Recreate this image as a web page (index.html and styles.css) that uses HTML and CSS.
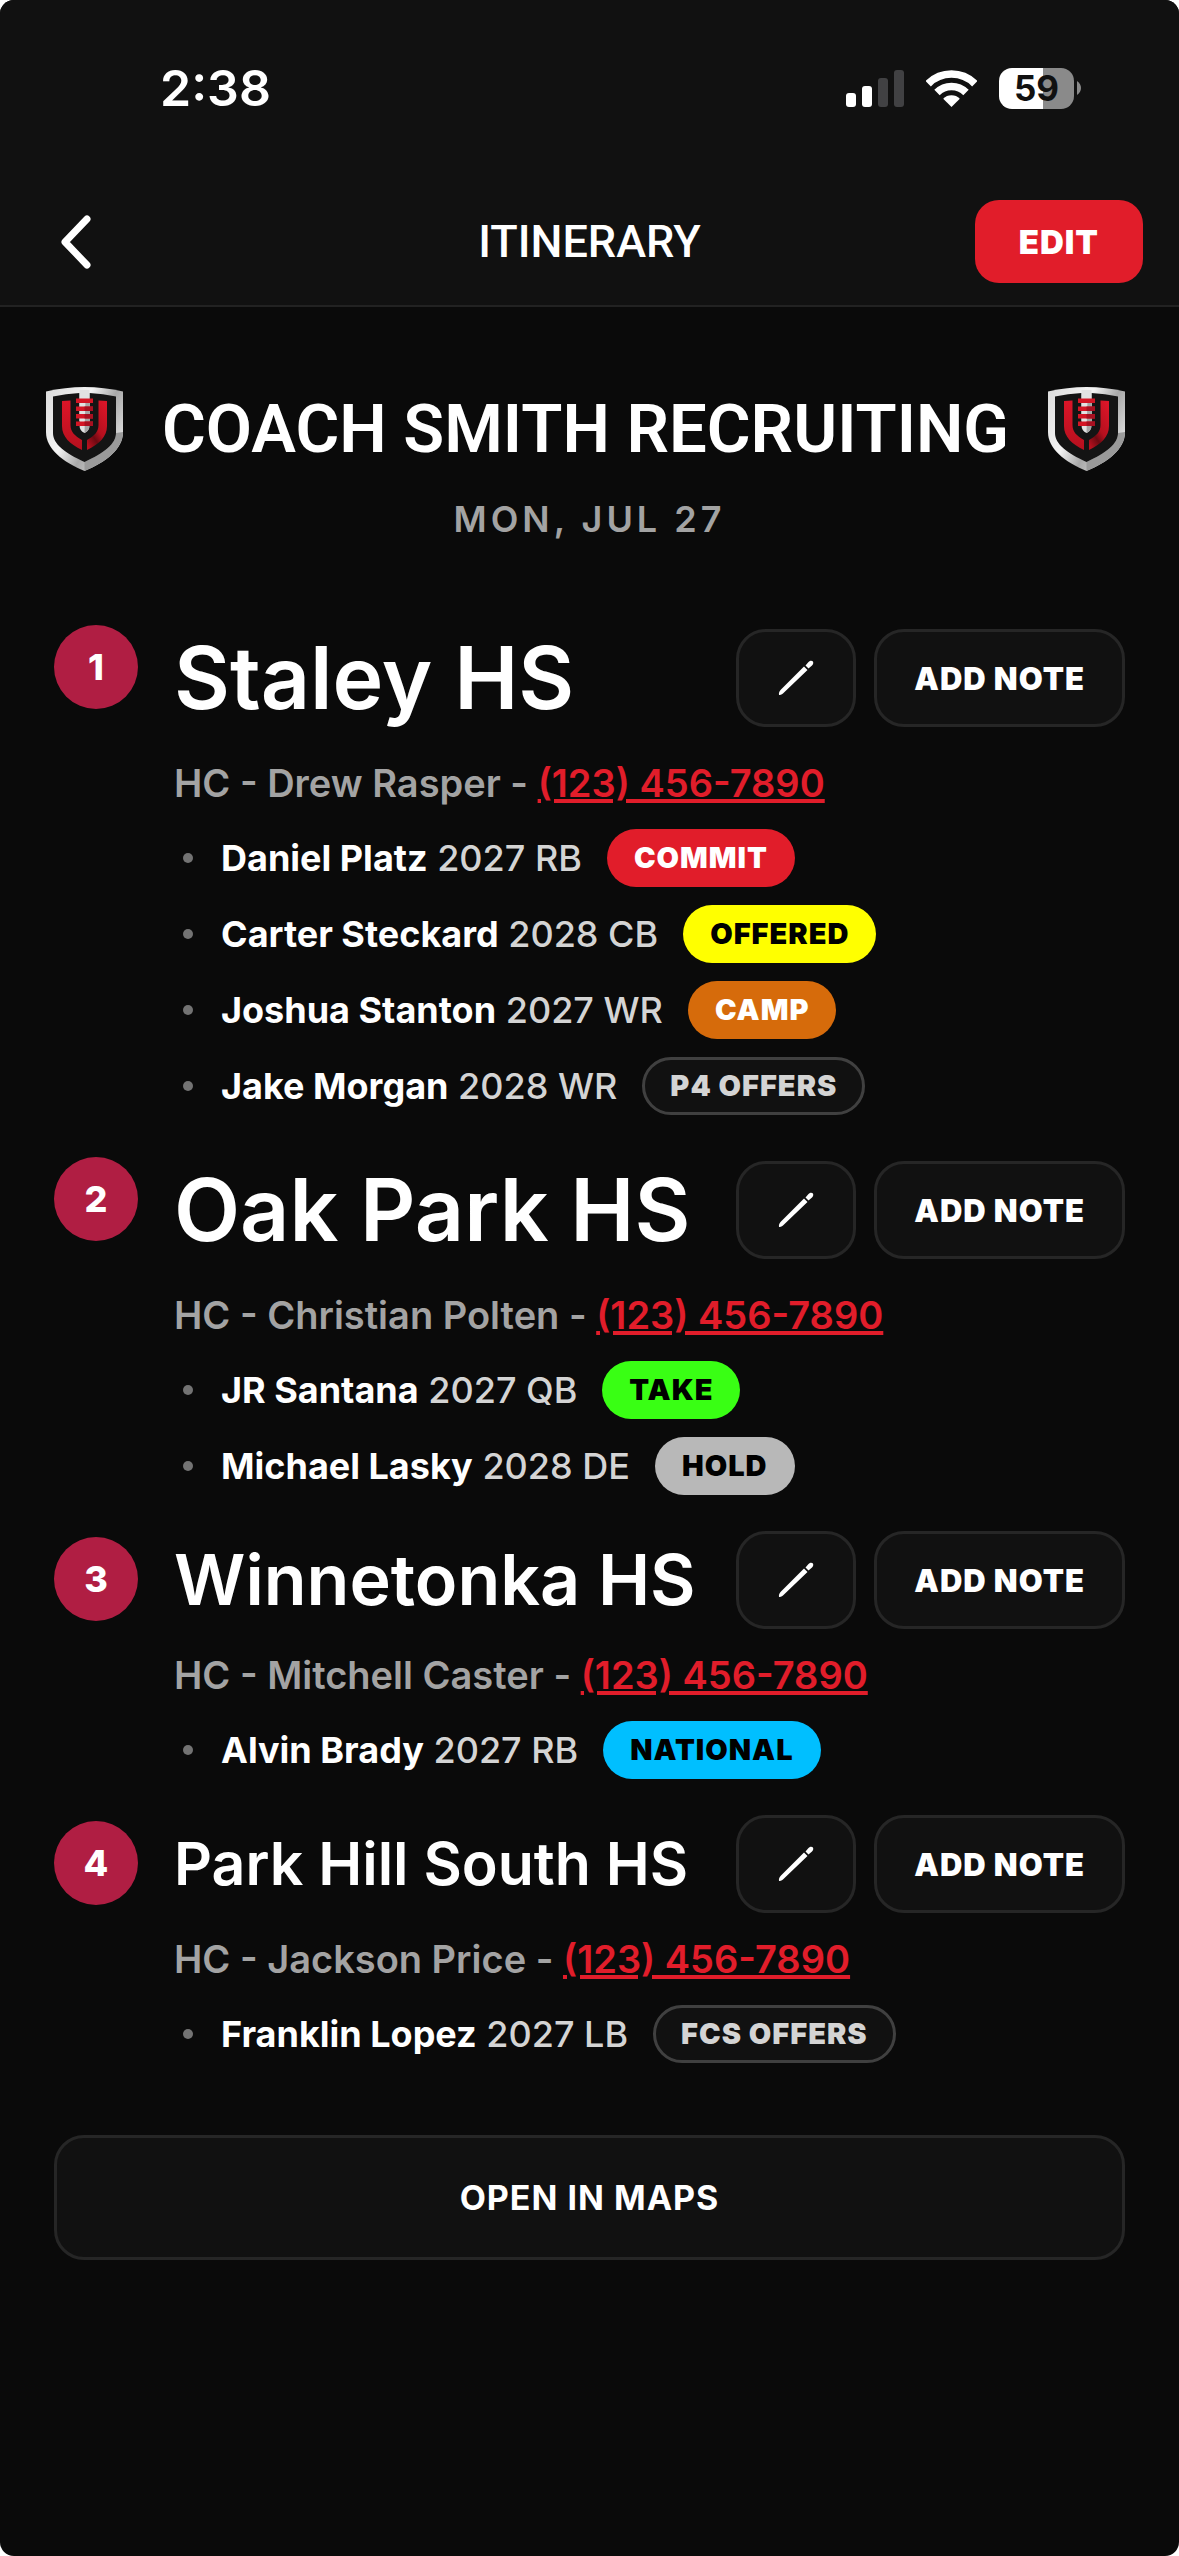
FILE: index.html
```html
<!DOCTYPE html>
<html lang="en">
<head>
    <meta charset="UTF-8">
    <meta name="viewport" content="width=device-width, initial-scale=1">
    <title>Itinerary</title>
    <link rel="stylesheet" href="styles.css">
</head>
<body>
<!-- shared icons -->
<svg class="defs" width="0" height="0" aria-hidden="true">
    <defs>
        <linearGradient id="silver" x1="0" y1="0" x2="1" y2="0.6">
            <stop offset="0" stop-color="#dcdcdc"/>
            <stop offset="0.45" stop-color="#f4f4f4"/>
            <stop offset="0.7" stop-color="#a8a8a8"/>
            <stop offset="1" stop-color="#dedede"/>
        </linearGradient>
        <linearGradient id="red" x1="0" y1="0" x2="0" y2="1">
            <stop offset="0" stop-color="#dc1528"/>
            <stop offset="1" stop-color="#b5101e"/>
        </linearGradient>
        <linearGradient id="darkred" x1="0.8" y1="0" x2="0.2" y2="1">
            <stop offset="0" stop-color="#dc1528"/>
            <stop offset="0.55" stop-color="#b5101e"/>
            <stop offset="0.75" stop-color="#6d0a12"/>
            <stop offset="1" stop-color="#b5101e"/>
        </linearGradient>
    </defs>
    <symbol id="shield" viewBox="0 0 77 84">
        <path fill="url(#silver)" d="M0 4.5Q19 0 38.5 0T77 4.5V45C77 62 60 75 38.5 84C17 75 0 62 0 45Z"/>
        <path fill="#9a9a9a" d="M38.5 75C58 66 70 57 70 46L77 45C77 62 60 75 38.5 84Z"/>
        <path fill="#141414" d="M7 9.5Q20 6.500 33.500 6V34H43.500V6Q57 6.500 70 9.500V46C70 57 58 66 38.500 75C19 66 7 57 7 46Z"/>
        <path fill="#e2e2e2" d="M33.500 3H43.500V38Q43.500 44 38.500 46Q33.500 44 33.500 38Z"/>
        <path fill="#a5a5a5" d="M39.500 12H43.500V38Q43.500 44 38.500 46Z"/>
        <path fill="url(#red)" d="M16 14L24.500 13.500V38C24.500 45 29 49 36 53V63C24 57 16 50 16 39Z"/>
        <path fill="url(#darkred)" d="M61 14L52.500 13.500V38C52.500 45 48 49 41 53V63C53 57 61 50 61 39Z"/>
        <path fill="#d41625" d="M30 11.500H47V16H30ZM30 19.500H47V24H30ZM30 27H47V31.500H30ZM30 34.500H47V39H30Z"/>
        <path fill="#a81020" d="M38.500 19.500H47V24H38.500ZM38.500 27H47V31.500H38.500ZM38.500 34.500H47V39H38.500Z"/>
    </symbol>
    <symbol id="pencil" viewBox="0 0 36 36">
        <path fill="#fff" d="M1 35C0.500 33 1.500 31 3 29.500L26 6.500L29.500 10L6 32.500C4.500 34 3 35.300 1 35Z"/>
        <path fill="#fff" d="M27.500 5.500L30.500 2C32.200 0.300 34 0.700 34.700 1.300C35.400 2 35.700 3.800 34 5.500L30.500 8.500Z"/>
    </symbol>
</svg>

<div class="screen">
    <header class="top">
        <div class="status">
            <span class="clock">2:38</span>
            <div class="status-icons">
                <svg width="58" height="38" viewBox="0 0 58 38" aria-hidden="true">
                    <rect x="0" y="24" width="10" height="14" rx="3" fill="#fff"/>
                    <rect x="16" y="17" width="10" height="21" rx="3" fill="#fff"/>
                    <rect x="32" y="9" width="10" height="29" rx="3" fill="#414143"/>
                    <rect x="48" y="1" width="10" height="37" rx="3" fill="#414143"/>
                </svg>
                <svg width="51" height="38" viewBox="0 0 51 38" aria-hidden="true">
                    <path fill="none" stroke="#fff" stroke-width="7.600" d="M2.200 14.700A33 33 0 0 1 48.800 14.700M11 23.500A20.500 20.500 0 0 1 40 23.500"/>
                    <path fill="#fff" d="M25.500 38L17.200 29.700A11.700 11.700 0 0 1 33.800 29.700Z"/>
                </svg>
                <div class="battery">
                    <span class="battery-level">59</span>
                    <svg width="4" height="14" viewBox="0 0 4 14" aria-hidden="true"><path fill="#8a8a8a" d="M0 0Q4 3 4 7T0 14Z"/></svg>
                </div>
            </div>
        </div>
        <nav class="nav">
            <button class="back" type="button" aria-label="Back">
                <svg width="32" height="56" viewBox="0 0 32 56"><path fill="none" stroke="#fff" stroke-width="7" stroke-linecap="round" stroke-linejoin="round" d="M27 5L5 28L27 51"/></svg>
            </button>
            <h1 class="nav-title">ITINERARY</h1>
            <button class="edit" type="button">EDIT</button>
        </nav>
    </header>

    <main class="content">
        <div class="trip">
            <svg class="shield"><use href="#shield"/></svg>
            <h2 class="trip-name">COACH SMITH RECRUITING</h2>
            <svg class="shield"><use href="#shield"/></svg>
        </div>
        <p class="date">MON, JUL 27</p>

        <ol class="stops">
            <li class="stop">
                <span class="num">1</span>
                <div class="info">
                    <div class="head large">
                        <h3>Staley HS</h3>
                        <button class="btn icon" type="button" aria-label="Edit stop"><svg width="36" height="36"><use href="#pencil"/></svg></button>
                        <button class="btn" type="button">ADD NOTE</button>
                    </div>
                    <p class="coach">HC - Drew Rasper - <a href="tel:1234567890">(123) 456-7890</a></p>
                    <ul class="players">
                        <li><span><b>Daniel Platz</b> 2027 RB</span><span class="tag commit">COMMIT</span></li>
                        <li><span><b>Carter Steckard</b> 2028 CB</span><span class="tag offered">OFFERED</span></li>
                        <li><span><b>Joshua Stanton</b> 2027 WR</span><span class="tag camp">CAMP</span></li>
                        <li><span><b>Jake Morgan</b> 2028 WR</span><span class="tag outline">P4 OFFERS</span></li>
                    </ul>
                </div>
            </li>
            <li class="stop">
                <span class="num">2</span>
                <div class="info">
                    <div class="head large">
                        <h3>Oak Park HS</h3>
                        <button class="btn icon" type="button" aria-label="Edit stop"><svg width="36" height="36"><use href="#pencil"/></svg></button>
                        <button class="btn" type="button">ADD NOTE</button>
                    </div>
                    <p class="coach">HC - Christian Polten - <a href="tel:1234567890">(123) 456-7890</a></p>
                    <ul class="players">
                        <li><span><b>JR Santana</b> 2027 QB</span><span class="tag take">TAKE</span></li>
                        <li><span><b>Michael Lasky</b> 2028 DE</span><span class="tag hold">HOLD</span></li>
                    </ul>
                </div>
            </li>
            <li class="stop">
                <span class="num">3</span>
                <div class="info">
                    <div class="head medium">
                        <h3>Winnetonka HS</h3>
                        <button class="btn icon" type="button" aria-label="Edit stop"><svg width="36" height="36"><use href="#pencil"/></svg></button>
                        <button class="btn" type="button">ADD NOTE</button>
                    </div>
                    <p class="coach">HC - Mitchell Caster - <a href="tel:1234567890">(123) 456-7890</a></p>
                    <ul class="players">
                        <li><span><b>Alvin Brady</b> 2027 RB</span><span class="tag national">NATIONAL</span></li>
                    </ul>
                </div>
            </li>
            <li class="stop">
                <span class="num">4</span>
                <div class="info">
                    <div class="head small">
                        <h3>Park Hill South HS</h3>
                        <button class="btn icon" type="button" aria-label="Edit stop"><svg width="36" height="36"><use href="#pencil"/></svg></button>
                        <button class="btn" type="button">ADD NOTE</button>
                    </div>
                    <p class="coach">HC - Jackson Price - <a href="tel:1234567890">(123) 456-7890</a></p>
                    <ul class="players">
                        <li><span><b>Franklin Lopez</b> 2027 LB</span><span class="tag outline">FCS OFFERS</span></li>
                    </ul>
                </div>
            </li>
        </ol>

        <button class="maps" type="button">OPEN IN MAPS</button>
    </main>
</div>
</body>
</html>
```
FILE: styles.css
```css
* {
    box-sizing: border-box;
    margin: 0;
    padding: 0;
}
body {
    background: #fff;
    color: #fff;
    font-family: Inter, "Liberation Sans", sans-serif;
}
ul, ol {
    list-style: none;
}
button {
    border: 0;
    background: none;
    color: #fff;
    font-family: inherit;
    letter-spacing: 1px;
    cursor: pointer;
}
svg {
    display: block;
    flex-shrink: 0;
}
.defs {
    position: absolute;
}
.screen {
    min-height: 100vh;
    background: #0a0a0a;
    border-radius: 14px;
    overflow: hidden;
}

/* header */
.top {
    background: #111;
    border-bottom: 2px solid #222;
}
.status {
    display: flex;
    justify-content: space-between;
    align-items: center;
    height: 178px;
    padding: 0 98px 2px 160px;
}
.clock {
    font-size: 50px;
    font-weight: 600;
}
.status-icons {
    display: flex;
    align-items: center;
    gap: 22px;
}
.battery {
    display: flex;
    align-items: center;
    gap: 3px;
}
.battery-level {
    width: 75px;
    border-radius: 13px;
    background: linear-gradient(90deg, #fff 59%, #8a8a8a 59%);
    color: #111;
    font-size: 35px;
    font-weight: 700;
    line-height: 41px;
    text-align: center;
}
.nav {
    display: grid;
    grid-template-columns: 1fr auto 1fr;
    align-items: center;
    height: 127px;
    padding: 0 36px 0 60px;
}
.back {
    justify-self: start;
}
.nav-title {
    padding-right: 24px;
    font-family: Roboto, sans-serif;
    font-size: 45px;
    font-weight: 500;
}
.edit {
    justify-self: end;
    height: 83px;
    padding: 0 44px;
    border-radius: 24px;
    background: #e11d2a;
    font-size: 33px;
    font-weight: 900;
}

/* trip title */
.content {
    padding: 74px 54px;
}
.trip {
    display: flex;
    justify-content: space-between;
    align-items: center;
    height: 96px;
    margin-left: -8px;
}
.shield {
    width: 77px;
    height: 84px;
}
.trip-name {
    font-family: Roboto, sans-serif;
    font-size: 67px;
    font-weight: 600;
    white-space: nowrap;
}
.date {
    margin-top: 20px;
    color: #a3a3a3;
    font-size: 36px;
    font-weight: 600;
    letter-spacing: 4px;
    line-height: 44px;
    text-align: center;
}

/* stops */
.stops {
    display: flex;
    flex-direction: column;
    gap: 36px;
    margin-top: 78px;
}
.stop {
    display: flex;
    gap: 36px;
}
.num {
    flex-shrink: 0;
    width: 84px;
    height: 84px;
    margin-top: 6px;
    border-radius: 50%;
    background: #b01e43;
    font-size: 36px;
    font-weight: 800;
    line-height: 84px;
    text-align: center;
}
.info {
    flex: 1;
    min-width: 0;
}
.head {
    display: flex;
    align-items: center;
    gap: 18px;
}
.head h3 {
    flex: 1;
    font-weight: 600;
    white-space: nowrap;
}
.large h3 {
    font-size: 86px;
    line-height: 118px;
}
.medium h3 {
    font-size: 70px;
    line-height: 98px;
}
.small h3 {
    font-size: 59px;
    line-height: 98px;
}
.btn {
    height: 98px;
    padding: 0 37px;
    border: 3px solid #262626;
    border-radius: 30px;
    background: #111;
    font-size: 31px;
    font-weight: 900;
    white-space: nowrap;
}
.icon {
    padding: 0 39px;
}
.coach {
    margin: 18px 0;
    color: #a3a3a3;
    font-size: 38px;
    font-weight: 600;
    line-height: 56px;
}
.coach a {
    color: #e11d2a;
    text-decoration-thickness: 4px;
}
.players {
    display: flex;
    flex-direction: column;
    gap: 18px;
}
.players li {
    display: flex;
    align-items: center;
    gap: 25px;
    color: #d4d4d4;
    font-size: 36px;
    font-weight: 500;
}
.players li::before {
    content: "";
    width: 10px;
    height: 10px;
    margin-left: 9px;
    margin-right: 3px;
    border-radius: 50%;
    background: #737373;
}
.players b {
    color: #fff;
    font-weight: 700;
}
.tag {
    padding: 0 27px;
    border-radius: 29px;
    color: #000;
    font-size: 29px;
    font-weight: 900;
    letter-spacing: 1px;
    line-height: 58px;
}
.commit {
    background: #e11d2a;
    color: #fff;
}
.offered {
    background: #ff0;
}
.camp {
    background: #d66b0b;
    color: #fff;
}
.take {
    background: #39ff14;
}
.hold {
    background: #b8b8b8;
}
.national {
    background: #00bfff;
}
.outline {
    padding: 0 25px;
    border: 3px solid #404040;
    background: #111;
    color: #d4d4d4;
    line-height: 52px;
}
.maps {
    width: 100%;
    height: 125px;
    margin-top: 72px;
    border: 3px solid #262626;
    border-radius: 30px;
    background: #111;
    font-size: 34px;
    font-weight: 700;
}
```
